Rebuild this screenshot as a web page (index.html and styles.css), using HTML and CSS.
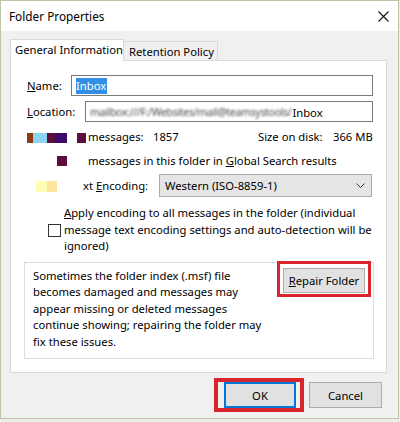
FILE: index.html
```html
<!DOCTYPE html>
<html>
<head>
<meta charset="utf-8">
<link rel="stylesheet" href="styles.css">
</head>
<body>
<div class="window">
  <div class="titlebar">
    <span class="title">Folder Properties</span>
    <svg class="close" viewBox="0 0 11 11"><path d="M0.5 0.5L10.5 10.5M10.5 0.5L0.5 10.5" stroke="#111" stroke-width="1.1" fill="none"/></svg>
  </div>
  <div class="content">
    <div class="tabs">
      <div class="tab active">General Information</div>
      <div class="tab">Retention Policy</div>
    </div>
    <div class="panel">
      <div class="row field-row first">
        <span class="flabel name-l"><u>N</u>ame:</span>
        <div class="input"><span class="sel">Inbox</span></div>
      </div>
      <div class="row field-row">
        <span class="flabel loc-l"><u>L</u>ocation:</span>
        <div class="input"><span class="blur">mailbox:///F:/Websites/mail@teamsystools/</span>Inbox</div>
      </div>
      <div class="row stat-row">
        <div class="sw-group sw1">
          <span class="sw brown"></span><span class="sw lblue"></span><span class="sw purple"></span><span class="sw indigo"></span><span class="sw purple sq"></span>
        </div>
        <span class="c-msgs">messages:</span>
        <span class="c-count">1857</span>
        <span class="c-size">Size on disk:</span>
        <span class="c-mb">366 MB</span>
      </div>
      <div class="row stat-row">
        <div class="sw-group sw2"><span class="sw purple sq"></span></div>
        <span>messages in this folder in <u>G</u>lobal Search results</span>
      </div>
      <div class="row enc-row">
        <div class="sw-group sw3"><span class="sw ylw1"></span><span class="sw ylw2"></span></div>
        <span class="enc-l">xt <u>E</u>ncoding:</span>
        <div class="select">
          <span class="select-text">Western (ISO-8859-1)</span>
          <svg class="chev" viewBox="0 0 9 5"><path d="M0.5 0.5L4.5 4.5L8.5 0.5" stroke="#333" stroke-width="1" fill="none"/></svg>
        </div>
      </div>
      <div class="row check-row">
        <span class="checkbox"></span>
        <span class="check-text"><u>A</u>pply encoding to all messages in the folder (individual<br>message text encoding settings and auto-detection will be<br>ignored)</span>
      </div>
      <div class="groupbox">
        <p class="group-text">Sometimes the folder index (.msf) file<br>becomes damaged and messages may<br>appear missing or deleted messages<br>continue showing; repairing the folder may<br>fix these issues.</p>
        <div class="hl hl-repair"><div class="btn repair"><u>R</u>epair Folder</div></div>
      </div>
    </div>
    <div class="buttons">
      <div class="hl hl-ok"><div class="btn ok">OK</div></div>
      <div class="btn cancel">Cancel</div>
    </div>
  </div>
</div>
</body>
</html>
```
FILE: styles.css
```css
* { box-sizing: border-box; }
html, body { margin: 0; padding: 0; }
body {
  width: 400px;
  height: 422px;
  overflow: hidden;
  background: #eef0e8;
  font-family: "Segoe UI", "Noto Sans", sans-serif;
  font-size: 11.25px;
  color: #000;
}
u { text-decoration: underline; text-underline-offset: 1px; }
.window {
  width: 399px;
  height: 419px;
  border: 1px solid #bcc4a9;
  background: #f0f0f0;
  display: flex;
  flex-direction: column;
}
.titlebar {
  height: 30px;
  background: #fff;
  display: flex;
  align-items: center;
  padding: 0 9px 0 8px;
}
.title { flex: 1; font-size: 11.8px; }
.close { width: 11px; height: 11px; }
.content { padding: 8px 0 0 9px; }
.tabs { display: flex; align-items: flex-end; height: 21px; }
.tab {
  border: 1px solid #d9d9d9;
  border-bottom: none;
  height: 19px;
  line-height: 17px;
  padding: 0 5px;
  background: #f0f0f0;
  white-space: nowrap;
}
.tab.active {
  height: 22px;
  margin-bottom: -1px;
  line-height: 19px;
  width: 114px;
  background: #fff;
  position: relative;
  z-index: 1;
  padding: 0 3px 0 4px;
}
.tab:not(.active) { border-left: none; width: 94px; padding: 1px 5px 0; }
.panel {
  width: 377px;
  height: 313px;
  background: #fff;
  border: 1px solid #d9d9d9;
  padding: 14px 13px 0 16px;
  display: flex;
  flex-direction: column;
}
.row { display: flex; align-items: center; white-space: nowrap; }
.field-row { height: 21px; margin-top: 5px; }
.field-row.first { margin-top: 0; }
.flabel { flex: none; }
.name-l { width: 44px; }
.loc-l { width: 58px; }
.input {
  flex: 1;
  height: 21px;
  border: 1px solid #7a7a7a;
  padding: 1px 0 0 4px;
  display: flex;
  align-items: center;
  overflow: hidden;
}
.sel {
  background: #338fe5;
  color: #fff;
  line-height: 16px;
  height: 16px;
  padding: 0 1px 0 0;
}
.blur {
  color: #4a4a4a;
  font-size: 10.6px;
  letter-spacing: -0.35px;
  filter: blur(1px);
  margin-right: 1px;
}
.stat-row { height: 20px; margin-top: 4px; }
.sw-group { display: flex; width: 61px; flex: none; align-items: center; }
.sw { display: block; height: 10px; }
.sw1 { margin-top: 4px; }
.brown { width: 6px; background: #8e3c14; }
.lblue { width: 14px; background: #8dd3f2; }
.purple { width: 8px; background: #5e0e3e; }
.indigo { width: 12px; background: #3c0b68; }
.sw.sq { width: 9px; margin-left: 10px; }
.sw2 { padding-left: 30px; margin-top: 2px; }
.sw2 .sw.sq { width: 10px; margin-left: 0; }
.c-msgs { width: 65px; }
.c-count { flex: 1; }
.c-size { width: 75px; }
.c-mb { width: 40px; }
.enc-row { height: 23px; margin-top: 4px; }
.sw3 { width: 56px; padding-left: 9px; margin-top: 1px; }
.ylw1 { width: 11px; height: 11px; background: #fffcb5; }
.ylw2 { width: 10px; height: 11px; background: #fde39b; }
.enc-l { width: 76px; flex: none; }
.select {
  width: 213px;
  height: 23px;
  background: #e5e5e5;
  border: 1px solid #acacac;
  display: flex;
  align-items: center;
  padding: 0 6px 0 5px;
}
.select-text { flex: 1; }
.chev { width: 9px; height: 5px; }
.check-row { margin-top: 8px; padding-left: 21px; align-items: center; }
.checkbox {
  width: 13px;
  height: 13px;
  border: 1px solid #333;
  background: #fff;
  flex: none;
  margin-top: 1px;
}
.check-text { margin-left: 3px; line-height: 16.5px; }
.groupbox {
  margin: 7px 0 0 -3px;
  width: 350px;
  height: 97px;
  border: 1px solid #dcdcdc;
  display: flex;
  align-items: flex-start;
  padding: 5px 2px 0 8px;
}
.group-text { margin: 0; line-height: 16.5px; white-space: nowrap; }
.hl { border-style: solid; border-color: #d9232d; flex: none; }
.hl-repair {
  margin: -7px 0 0 auto;
  border-width: 3px;
  padding: 4px 3px 1px 3px;
}
.btn {
  background: #e1e1e1;
  border: 1px solid #adadad;
  display: flex;
  align-items: center;
  justify-content: center;
  white-space: nowrap;
}
.repair { width: 82px; height: 25px; }
.buttons {
  display: flex;
  justify-content: flex-end;
  align-items: center;
  gap: 5px;
  margin-top: 5px;
  padding-right: 16px;
}
.hl-ok { border-width: 4px; padding: 0 4px 0 6px; }
.ok { width: 72px; height: 26px; border: 2px solid #0078d7; }
.cancel { width: 73px; height: 26px; }
```
